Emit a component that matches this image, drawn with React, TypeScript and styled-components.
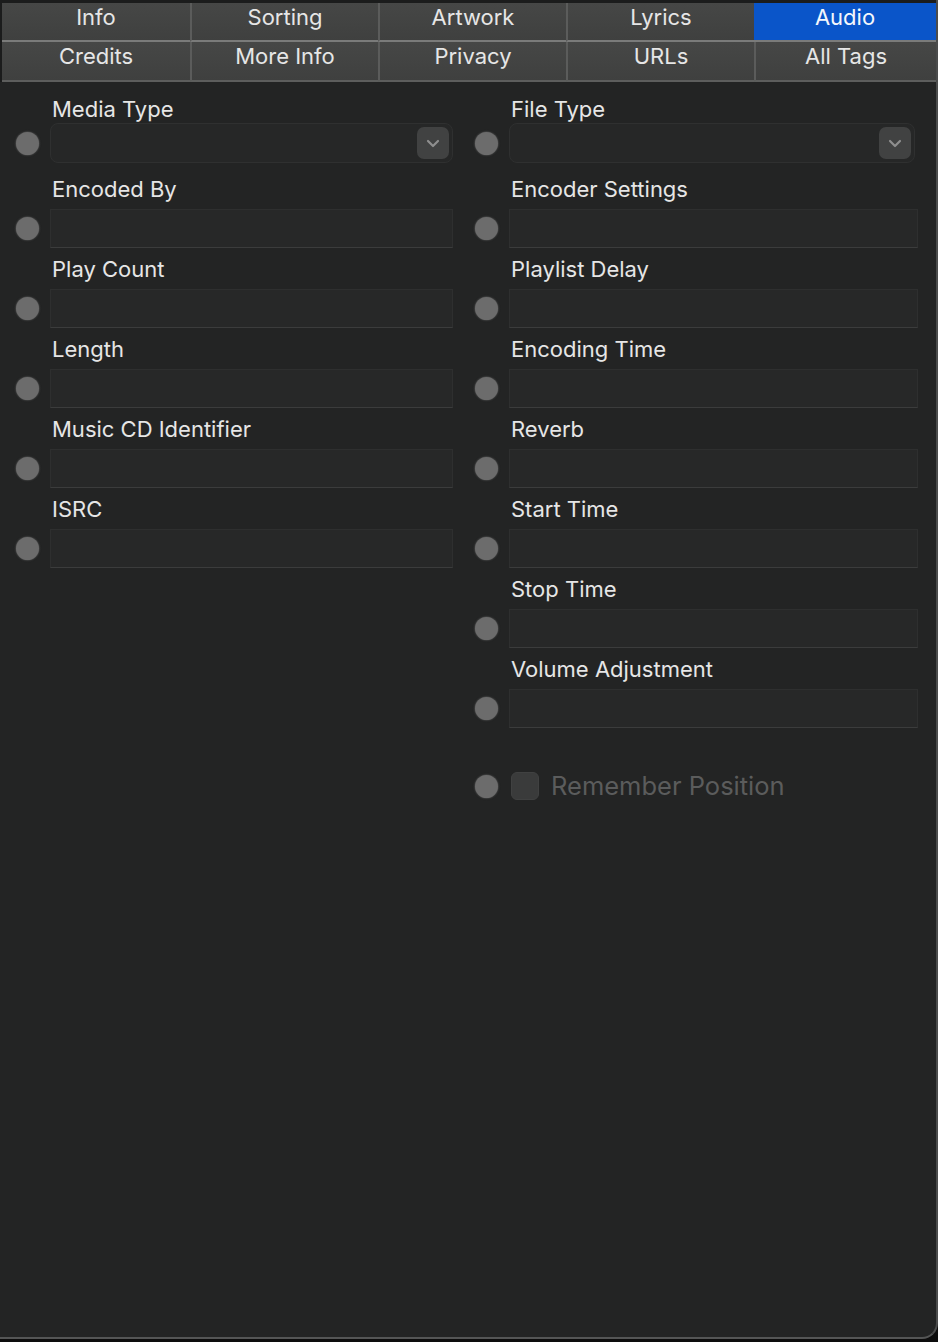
import React from "react";
import styled, { createGlobalStyle } from "styled-components";

const Global = createGlobalStyle`
  html, body { margin: 0; padding: 0; background: #0d0d0d; }
  body { font-family: Inter, "Noto Sans", "Liberation Sans", sans-serif; -webkit-font-smoothing: antialiased; }
  * { box-sizing: border-box; }
`;

const Window = styled.div`
  width: 938px;
  height: 1339px;
  background: #232424;
  border-right: 2px solid #4b4c4c;
  border-bottom: 2px solid #545555;
  border-bottom-right-radius: 16px;
  overflow: hidden;
  display: flex;
  flex-direction: column;
`;

const TabBar = styled.div`
  background: #1b1c1c;
  padding: 3px 0 0 2px;
`;

const TabGrid = styled.div`
  display: grid;
  grid-template-columns: repeat(4, 188px) 1fr;
`;

const Tab = styled.div<{ $active?: boolean; $first?: boolean; $row: 1 | 2 }>`
  height: ${(p) => (p.$row === 1 ? 39 : 40)}px;
  display: flex;
  align-items: center;
  justify-content: center;
  padding-bottom: 10px;
  font-size: 22px;
  color: ${(p) => (p.$active ? "#f4f7fc" : "#e6e6e6")};
  background: ${(p) =>
    p.$active ? "#0a55c9" : "linear-gradient(#464746, #3f403f)"};
  border-left: ${(p) => (p.$first || p.$active ? "0" : "2px solid #5b5c5b")};
  border-bottom: 2px solid ${(p) => (p.$row === 1 ? "#7a7b7a" : "#5d5e5d")};
`;

const Body = styled.div`
  display: grid;
  grid-template-columns: 437px 443px;
  column-gap: 22px;
  padding: 6px 0 0 16px;
  align-items: start;
`;

const Column = styled.div`
  display: flex;
  flex-direction: column;
`;

const Field = styled.div`
  height: 80px;
  display: grid;
  grid-template-columns: 34px 1fr;
  grid-template-rows: auto auto;
  align-content: start;
`;

const Label = styled.div<{ $select?: boolean }>`
  grid-column: 2;
  padding: 9px 0 0 2px;
  height: ${(p) => (p.$select ? 35 : 41)}px;
  line-height: 24px;
  font-size: 22px;
  color: #e6e6e6;
  white-space: nowrap;
`;

const Dot = styled.span`
  width: 23px;
  height: 23px;
  border-radius: 50%;
  background: #6c6c6c;
  box-shadow: 0 0 1.5px 0.5px rgba(108, 108, 108, 0.6);
`;

const FieldDot = styled(Dot)`
  grid-column: 1;
  grid-row: 2;
  align-self: center;
`;

const TextInput = styled.div`
  grid-column: 2;
  grid-row: 2;
  height: 39px;
  background: #272828;
  border: 1px solid #2e2f2f;
  border-bottom-color: #3b3c3c;
`;

const Select = styled.div<{ $inset?: number }>`
  grid-column: 2;
  grid-row: 2;
  margin-right: ${(p) => p.$inset ?? 0}px;
  height: 40px;
  background: #262727;
  border: 1.5px solid #2f3030;
  border-radius: 8px;
  display: flex;
  justify-content: flex-end;
  align-items: center;
  padding-right: 3px;
`;

const SelectButton = styled.div`
  width: 32px;
  height: 32px;
  border-radius: 7px;
  background: #414242;
  display: flex;
  align-items: center;
  justify-content: center;
`;

const CheckRow = styled.div`
  margin-top: 44px;
  display: flex;
  align-items: center;
  height: 28px;
`;

const Check = styled.span`
  width: 28px;
  height: 28px;
  margin-left: 13px;
  border-radius: 6px;
  background: #3a3b3b;
  border: 1px solid #404141;
`;

const CheckLabel = styled.span`
  margin-left: 12px;
  font-size: 25.5px;
  color: #5b5c5c;
  white-space: nowrap;
  padding-bottom: 1px;
`;

const Chevron = () => (
  <svg width="14" height="9" viewBox="0 0 14 9">
    <path d="M2 2 L7 7 L12 2" fill="none" stroke="#8e8e8e" strokeWidth="2.2" strokeLinecap="round" strokeLinejoin="round" />
  </svg>
);

type F = { label: string; select?: boolean; inset?: number };

const FieldItem = ({ label, select, inset }: F) => (
  <Field>
    <Label $select={select}>{label}</Label>
    <FieldDot />
    {select ? (
      <Select $inset={inset}>
        <SelectButton>
          <Chevron />
        </SelectButton>
      </Select>
    ) : (
      <TextInput />
    )}
  </Field>
);

const row1 = ["Info", "Sorting", "Artwork", "Lyrics", "Audio"];
const row2 = ["Credits", "More Info", "Privacy", "URLs", "All Tags"];

const left: F[] = [
  { label: "Media Type", select: true },
  { label: "Encoded By" },
  { label: "Play Count" },
  { label: "Length" },
  { label: "Music CD Identifier" },
  { label: "ISRC" },
];

const right: F[] = [
  { label: "File Type", select: true, inset: 3 },
  { label: "Encoder Settings" },
  { label: "Playlist Delay" },
  { label: "Encoding Time" },
  { label: "Reverb" },
  { label: "Start Time" },
  { label: "Stop Time" },
  { label: "Volume Adjustment" },
];

export default function App() {
  return (
    <>
      <Global />
      <Window>
        <TabBar>
          <TabGrid>
            {row1.map((t, i) => (
              <Tab key={t} $row={1} $first={i === 0} $active={t === "Audio"}>
                {t}
              </Tab>
            ))}
            {row2.map((t, i) => (
              <Tab key={t} $row={2} $first={i === 0}>
                {t}
              </Tab>
            ))}
          </TabGrid>
        </TabBar>
        <Body>
          <Column>
            {left.map((f) => (
              <FieldItem key={f.label} {...f} />
            ))}
          </Column>
          <Column>
            {right.map((f) => (
              <FieldItem key={f.label} {...f} />
            ))}
            <CheckRow>
              <Dot />
              <Check />
              <CheckLabel>Remember Position</CheckLabel>
            </CheckRow>
          </Column>
        </Body>
      </Window>
    </>
  );
}
